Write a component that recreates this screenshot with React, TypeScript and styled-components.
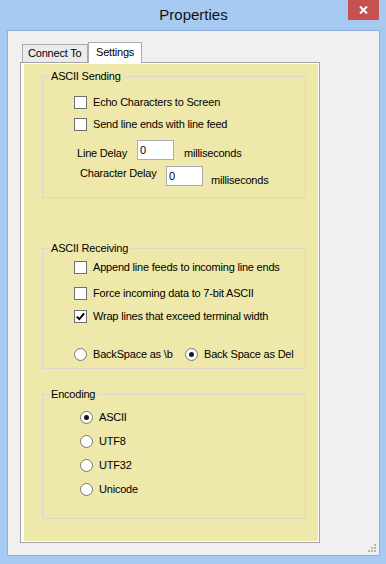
import React from 'react';
import styled, { createGlobalStyle } from 'styled-components';

const GlobalStyle = createGlobalStyle`
    html, body {
        margin: 0;
        padding: 0;
    }
    body {
        background: #a6caf2;
        font-family: "Liberation Sans", Arial, sans-serif;
    }
`;

const Frame = styled.div`
    width: 386px;
    height: 564px;
    box-sizing: border-box;
    padding: 0 6px 8px 7px;
    background: #a6caf2;
    display: flex;
    flex-direction: column;
`;

const TitleBar = styled.div`
    height: 30px;
    flex: none;
    display: grid;
    grid-template-columns: 1fr auto 1fr;
    align-items: start;
`;

const TitleText = styled.div`
    grid-column: 2;
    font-size: 15px;
    line-height: 30px;
    color: #111;
`;

const CloseButton = styled.div`
    grid-column: 3;
    justify-self: end;
    margin-right: 1px;
    width: 31px;
    height: 20px;
    background: #c75050;
    display: grid;
    place-items: center;
`;

const Client = styled.div`
    flex: 1;
    border: 1px solid #8fb0da;
    background: #f0f0f0;
    display: flex;
    flex-direction: column;
`;

const TabStrip = styled.div`
    display: flex;
    align-items: flex-end;
    height: 20px;
    margin: 11px 0 0 14px;
`;

const Tab = styled.div<{ $active?: boolean; $w: number }>`
    position: relative;
    z-index: ${p => (p.$active ? 1 : 0)};
    box-sizing: border-box;
    width: ${p => p.$w}px;
    height: ${p => (p.$active ? 21 : 18)}px;
    margin-bottom: ${p => (p.$active ? -1 : 0)}px;
    padding-left: ${p => (p.$active ? 7 : 5)}px;
    border: 1px solid #acacac;
    border-bottom: none;
    background: ${p => (p.$active ? '#ffffff' : '#ebebeb')};
    font-size: 11px;
    letter-spacing: -0.2px;
    line-height: ${p => (p.$active ? 18 : 17)}px;
    color: #000;
    white-space: nowrap;
`;

const TabPanel = styled.div`
    margin-left: 12px;
    width: 300px;
    height: 481px;
    flex: none;
    box-sizing: border-box;
    border: 1px solid #a3a3a3;
    background: #ffffff;
    padding: 1px 1px 1px 3px;
`;

const PageFill = styled.div`
    height: 100%;
    box-sizing: border-box;
    background: #eee8aa;
    padding-left: 18px;
    display: flex;
    flex-direction: column;
    align-items: flex-start;
`;

const Group = styled.fieldset<{ $mt: number; $pb: number }>`
    margin: ${p => p.$mt}px 0 0 0;
    padding: 0 0 ${p => p.$pb}px 0;
    width: 264px;
    min-width: 0;
    box-sizing: border-box;
    border: 1px solid #d9d9d0;
`;

const GroupLegend = styled.legend`
    margin-left: 6px;
    padding: 0 2px;
    font-size: 11px;
    letter-spacing: -0.2px;
    line-height: 14px;
    color: #000;
`;

const OptionRow = styled.div<{ $mt?: number; $indent: number }>`
    display: flex;
    align-items: center;
    height: 22px;
    margin-top: ${p => p.$mt ?? 0}px;
    padding-left: ${p => p.$indent}px;
`;

const Option = styled.div<{ $w?: number }>`
    display: flex;
    align-items: center;
    gap: 6px;
    ${p => (p.$w ? `width: ${p.$w}px;` : '')}
    flex: none;
`;

const Label = styled.span`
    font-size: 11px;
    letter-spacing: -0.2px;
    line-height: 14px;
    color: #000;
    white-space: nowrap;
`;

const CheckBox = styled.span`
    width: 13px;
    height: 13px;
    box-sizing: border-box;
    border: 1px solid #707070;
    background: #fff;
    display: grid;
    place-items: center;
`;

const RadioRing = styled.span`
    width: 13px;
    height: 13px;
    box-sizing: border-box;
    border: 1px solid #7a7a7a;
    border-radius: 50%;
    background: radial-gradient(circle at 50% 40%, #ffffff 55%, #e8e8e8 100%);
    display: grid;
    place-items: center;
`;

const RadioDot = styled.span`
    width: 5px;
    height: 5px;
    border-radius: 50%;
    background: #1a1a1a;
`;

const DelayRow = styled.div<{ $mt: number; $indent: number }>`
    display: flex;
    align-items: flex-start;
    height: 20px;
    margin-top: ${p => p.$mt}px;
    padding-left: ${p => p.$indent}px;
`;

const DelayLabel = styled(Label)<{ $w: number; $dy: number }>`
    width: ${p => p.$w}px;
    padding-top: ${p => p.$dy}px;
    flex: none;
`;

const NumBox = styled.div<{ $w: number }>`
    width: ${p => p.$w}px;
    height: 20px;
    flex: none;
    box-sizing: border-box;
    border: 1px solid #abadb3;
    background: #fff;
    padding-left: 2px;
    display: flex;
    align-items: center;
    font-size: 11px;
    color: #000;
`;

const Unit = styled(Label)<{ $gap: number; $dy: number }>`
    margin-left: ${p => p.$gap}px;
    padding-top: ${p => p.$dy}px;
`;

const Footer = styled.div`
    flex: 1;
    display: flex;
    justify-content: flex-end;
    align-items: flex-end;
    padding: 0 2px 2px 0;
`;

function Check({ checked, children }: { checked?: boolean; children: React.ReactNode }) {
    return (
        <Option>
            <CheckBox>
                {checked && (
                    <svg width="11" height="11" viewBox="0 0 11 11">
                        <path d="M1.8 5.6 L4.3 8.1 L9.2 2.4" fill="none" stroke="#000" strokeWidth="2" />
                    </svg>
                )}
            </CheckBox>
            <Label>{children}</Label>
        </Option>
    );
}

function Radio({ checked, w, children }: { checked?: boolean; w?: number; children: React.ReactNode }) {
    return (
        <Option $w={w}>
            <RadioRing>{checked && <RadioDot />}</RadioRing>
            <Label>{children}</Label>
        </Option>
    );
}

export default function App() {
    return (
        <>
            <GlobalStyle />
            <Frame>
                <TitleBar>
                    <TitleText>Properties</TitleText>
                    <CloseButton>
                        <svg width="9" height="8" viewBox="0 0 9 8">
                            <path d="M1 0.5 L8 7.5 M8 0.5 L1 7.5" stroke="#fff" strokeWidth="2" />
                        </svg>
                    </CloseButton>
                </TitleBar>
                <Client>
                    <TabStrip>
                        <Tab $w={66}>Connect To</Tab>
                        <Tab $w={54} $active>Settings</Tab>
                    </TabStrip>
                    <TabPanel>
                        <PageFill>
                            <Group $mt={5} $pb={11}>
                                <GroupLegend>ASCII Sending</GroupLegend>
                                <OptionRow $mt={8} $indent={31}>
                                    <Check>Echo Characters to Screen</Check>
                                </OptionRow>
                                <OptionRow $indent={31}>
                                    <Check>Send line ends with line feed</Check>
                                </OptionRow>
                                <DelayRow $mt={5} $indent={34}>
                                    <DelayLabel $w={60} $dy={6}>Line Delay</DelayLabel>
                                    <NumBox $w={37}>0</NumBox>
                                    <Unit $gap={10} $dy={6}>milliseconds</Unit>
                                </DelayRow>
                                <DelayRow $mt={6} $indent={37}>
                                    <DelayLabel $w={86} $dy={0}>Character Delay</DelayLabel>
                                    <NumBox $w={37}>0</NumBox>
                                    <Unit $gap={8} $dy={7}>milliseconds</Unit>
                                </DelayRow>
                            </Group>

                            <Group $mt={43} $pb={3}>
                                <GroupLegend>ASCII Receiving</GroupLegend>
                                <OptionRow $mt={1} $indent={31}>
                                    <Check>Append line feeds to incoming line ends</Check>
                                </OptionRow>
                                <OptionRow $mt={4} $indent={31}>
                                    <Check>Force incoming data to 7-bit ASCII</Check>
                                </OptionRow>
                                <OptionRow $mt={1} $indent={31}>
                                    <Check checked>Wrap lines that exceed terminal width</Check>
                                </OptionRow>
                                <OptionRow $mt={16} $indent={31}>
                                    <Radio w={111}>BackSpace as \b</Radio>
                                    <Radio checked>Back Space as Del</Radio>
                                </OptionRow>
                            </Group>

                            <Group $mt={18} $pb={18}>
                                <GroupLegend>Encoding</GroupLegend>
                                <OptionRow $mt={5} $indent={37}>
                                    <Radio checked>ASCII</Radio>
                                </OptionRow>
                                <OptionRow $mt={2} $indent={37}>
                                    <Radio>UTF8</Radio>
                                </OptionRow>
                                <OptionRow $mt={2} $indent={37}>
                                    <Radio>UTF32</Radio>
                                </OptionRow>
                                <OptionRow $mt={2} $indent={37}>
                                    <Radio>Unicode</Radio>
                                </OptionRow>
                            </Group>
                        </PageFill>
                    </TabPanel>
                    <Footer>
                        <svg width="9" height="9" viewBox="0 0 9 9">
                            <g fill="#b4b4b4">
                                <rect x="6" y="0" width="2" height="2" />
                                <rect x="3" y="3" width="2" height="2" />
                                <rect x="6" y="3" width="2" height="2" />
                                <rect x="0" y="6" width="2" height="2" />
                                <rect x="3" y="6" width="2" height="2" />
                                <rect x="6" y="6" width="2" height="2" />
                            </g>
                        </svg>
                    </Footer>
                </Client>
            </Frame>
        </>
    );
}
